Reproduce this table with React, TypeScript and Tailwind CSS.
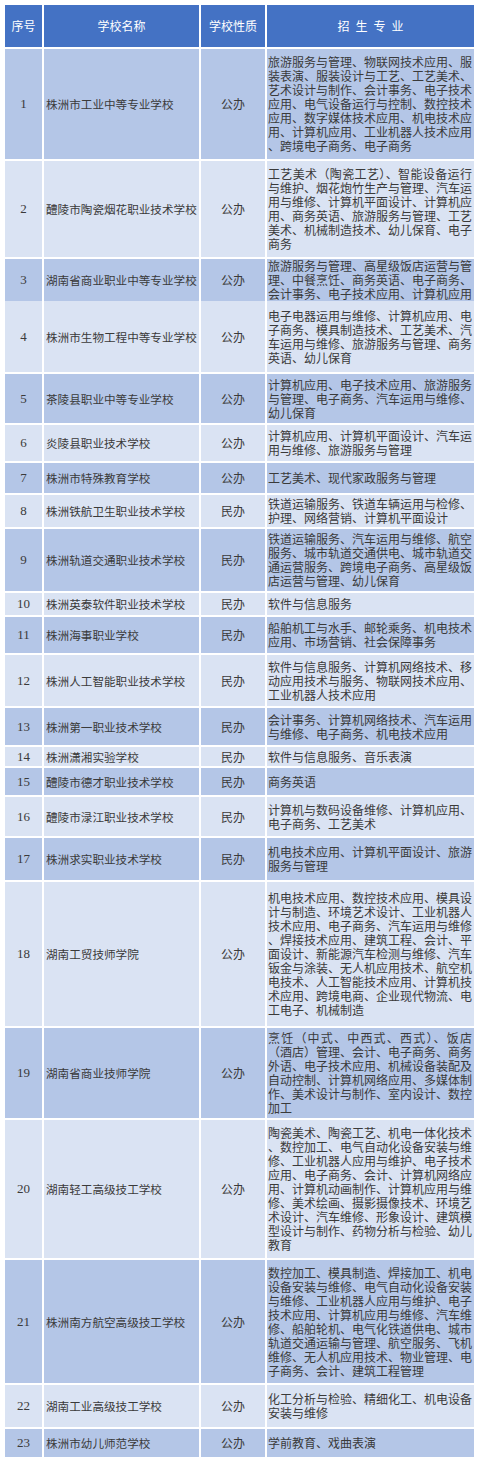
import React from "react";

type Row = { no: number; name: string; kind: string; h: number; lines: string[] };

const rows: Row[] = [
  { no: 1, name: "株洲市工业中等专业学校", kind: "公办", h: 110, lines: ["旅游服务与管理、物联网技术应用、服", "装表演、服装设计与工艺、工艺美术、", "艺术设计与制作、会计事务、电子技术", "应用、电气设备运行与控制、数控技术", "应用、数字媒体技术应用、机电技术应", "用、计算机应用、工业机器人技术应用", "、跨境电子商务、电子商务"] },
  { no: 2, name: "醴陵市陶瓷烟花职业技术学校", kind: "公办", h: 96, lines: ["工艺美术（陶瓷工艺）、智能设备运行", "与维护、烟花炮竹生产与管理、汽车运", "用与维修、计算机平面设计、计算机应", "用、商务英语、旅游服务与管理、工艺", "美术、机械制造技术、幼儿保育、电子", "商务"] },
  { no: 3, name: "湖南省商业职业中等专业学校", kind: "公办", h: 40, lines: ["旅游服务与管理、高星级饭店运营与管", "理、中餐烹饪、商务英语、电子商务、", "会计事务、电子技术应用、计算机应用"] },
  { no: 4, name: "株洲市生物工程中等专业学校", kind: "公办", h: 71, lines: ["电子电器运用与维修、计算机应用、电", "子商务、模具制造技术、工艺美术、汽", "车运用与维修、旅游服务与管理、商务", "英语、幼儿保育"] },
  { no: 5, name: "茶陵县职业中等专业学校", kind: "公办", h: 49, lines: ["计算机应用、电子技术应用、旅游服务", "与管理、电子商务、汽车运用与维修、", "幼儿保育"] },
  { no: 6, name: "炎陵县职业技术学校", kind: "公办", h: 36, lines: ["计算机应用、计算机平面设计、汽车运", "用与维修、旅游服务与管理"] },
  { no: 7, name: "株洲市特殊教育学校", kind: "公办", h: 30, lines: ["工艺美术、现代家政服务与管理"] },
  { no: 8, name: "株洲铁航卫生职业技术学校", kind: "民办", h: 32, lines: ["铁道运输服务、铁道车辆运用与检修、", "护理、网络营销、计算机平面设计"] },
  { no: 9, name: "株洲轨道交通职业技术学校", kind: "民办", h: 62, lines: ["铁道运输服务、汽车运用与维修、航空", "服务、城市轨道交通供电、城市轨道交", "通运营服务、跨境电子商务、高星级饭", "店运营与管理、幼儿保育"] },
  { no: 10, name: "株洲英泰软件职业技术学校", kind: "民办", h: 22, lines: ["软件与信息服务"] },
  { no: 11, name: "株洲海事职业学校", kind: "民办", h: 36, lines: ["船舶机工与水手、邮轮乘务、机电技术", "应用、市场营销、社会保障事务"] },
  { no: 12, name: "株洲人工智能职业技术学校", kind: "民办", h: 51, lines: ["软件与信息服务、计算机网络技术、移", "动应用技术与服务、物联网技术应用、", "工业机器人技术应用"] },
  { no: 13, name: "株洲第一职业技术学校", kind: "民办", h: 37, lines: ["会计事务、计算机网络技术、汽车运用", "与维修、电子商务、机电技术应用"] },
  { no: 14, name: "株洲潇湘实验学校", kind: "民办", h: 19, lines: ["软件与信息服务、音乐表演"] },
  { no: 15, name: "醴陵市德才职业技术学校", kind: "民办", h: 27, lines: ["商务英语"] },
  { no: 16, name: "醴陵市渌江职业技术学校", kind: "民办", h: 39, lines: ["计算机与数码设备维修、计算机应用、", "电子商务、工艺美术"] },
  { no: 17, name: "株洲求实职业技术学校", kind: "民办", h: 42, lines: ["机电技术应用、计算机平面设计、旅游", "服务与管理"] },
  { no: 18, name: "湖南工贸技师学院", kind: "公办", h: 144, lines: ["机电技术应用、数控技术应用、模具设", "计与制造、环境艺术设计、工业机器人", "技术应用、电子商务、汽车运用与维修", "、焊接技术应用、建筑工程、会计、平", "面设计、新能源汽车检测与维修、汽车", "钣金与涂装、无人机应用技术、航空机", "电技术、人工智能技术应用、计算机技", "术应用、跨境电商、企业现代物流、电", "工电子、机械制造"] },
  { no: 19, name: "湖南省商业技师学院", kind: "公办", h: 90, lines: ["烹饪（中式、中西式、西式）、饭店", "（酒店）管理、会计、电子商务、商务", "外语、电子技术应用、机械设备装配及", "自动控制、计算机网络应用、多媒体制", "作、美术设计与制作、室内设计、数控", "加工"] },
  { no: 20, name: "湖南轻工高级技工学校", kind: "公办", h: 138, lines: ["陶瓷美术、陶瓷工艺、机电一体化技术", "、数控加工、电气自动化设备安装与维", "修、工业机器人应用与维护、电子技术", "应用、电子商务、会计、计算机网络应", "用、计算机动画制作、计算机应用与维", "修、美术绘画、摄影摄像技术、环境艺", "术设计、汽车维修、形象设计、建筑模", "型设计与制作、药物分析与检验、幼儿", "教育"] },
  { no: 21, name: "株洲南方航空高级技工学校", kind: "公办", h: 123, lines: ["数控加工、模具制造、焊接加工、机电", "设备安装与维修、电气自动化设备安装", "与维修、工业机器人应用与维护、电子", "技术应用、计算机应用与维修、汽车维", "修、船舶轮机、电气化铁道供电、城市", "轨道交通运输与管理、航空服务、飞机", "维修、无人机应用技术、物业管理、电", "子商务、会计、建筑工程管理"] },
  { no: 22, name: "湖南工业高级技工学校", kind: "公办", h: 42, lines: ["化工分析与检验、精细化工、机电设备", "安装与维修"] },
  { no: 23, name: "株洲市幼儿师范学校", kind: "公办", h: 28, lines: ["学前教育、戏曲表演"] },
];

const cjk = "font-['Noto_Sans_CJK_SC',sans-serif]";

export default function App() {
  return (
    <div className="w-[480px] h-[1464px] bg-white pt-[5px] pl-[5px]">
      <div className={`w-[469px] flex flex-col gap-[2px] bg-white text-[12px] leading-[14px] text-[#3a3a3a] ${cjk}`}>
        <div className="h-[42px] grid grid-cols-[37px_155px_64px_207px] gap-x-[2px] text-white">
          <div className="bg-[#4472c4] flex items-center justify-center">序号</div>
          <div className="bg-[#4472c4] flex items-center justify-center">学校名称</div>
          <div className="bg-[#4472c4] flex items-center justify-center">学校性质</div>
          <div className="bg-[#4472c4] flex items-center justify-center tracking-[6px] pl-[6px]">招生专业</div>
        </div>
        {rows.map((r) => {
          const bg = r.no % 2 === 1 ? "bg-[#b4c6e7]" : "bg-[#dae3f3]";
          return (
            <div
              key={r.no}
              className="grid grid-cols-[37px_155px_64px_207px] gap-x-[2px]"
              style={{ height: r.h }}
            >
              <div className={`${bg} flex items-center justify-center font-['Liberation_Serif',serif] text-[13px]`}>{r.no}</div>
              <div className={`${bg} flex items-center pl-[2px] whitespace-nowrap text-[11.6px]`}>{r.name}</div>
              <div className={`${bg} flex items-center justify-center`}>{r.kind}</div>
              <div className={`${bg} flex flex-col justify-center pl-[1px] pr-[2px]`}>
                {r.lines.map((l, i) => (
                  <div
                    key={i}
                    className={
                      i < r.lines.length - 1
                        ? "whitespace-nowrap text-justify [text-align-last:justify]"
                        : "whitespace-nowrap"
                    }
                  >
                    {l}
                  </div>
                ))}
              </div>
            </div>
          );
        })}
      </div>
    </div>
  );
}
